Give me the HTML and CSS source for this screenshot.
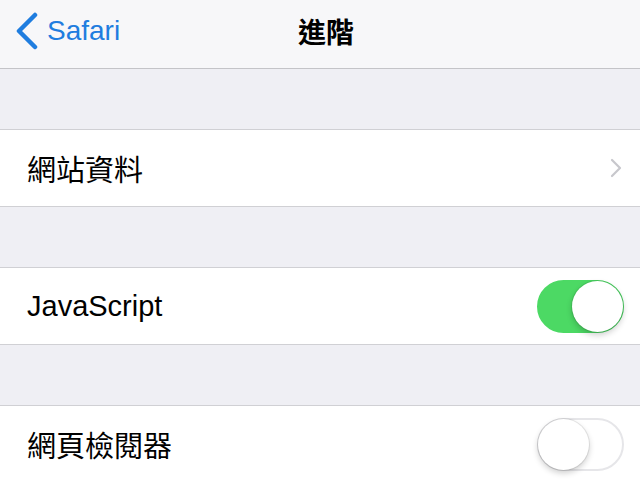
FILE: index.html
```html
<!DOCTYPE html>
<html lang="zh-Hant">
<head>
    <meta charset="UTF-8">
    <meta name="viewport" content="width=device-width, initial-scale=1.0">
    <title>進階</title>
    <link rel="stylesheet" href="styles.css">
</head>
<body>
    <header class="navbar">
        <a class="back" href="#">
            <svg class="back-icon" width="24" height="38" viewBox="0 0 24 38">
                <path d="M21 3 L5 19 L21 35" fill="none" stroke="currentColor" stroke-width="4.5" stroke-linecap="round" stroke-linejoin="round"/>
            </svg>
            <span>Safari</span>
        </a>
        <h1 class="title">進階</h1>
        <div class="spacer"></div>
    </header>

    <main class="settings">
        <section class="group">
            <div class="row">
                <span class="label">網站資料</span>
                <svg class="disclosure" width="12" height="20" viewBox="0 0 12 20">
                    <path d="M2 2 L10 10 L2 18" fill="none" stroke="currentColor" stroke-width="2.2" stroke-linecap="round" stroke-linejoin="round"/>
                </svg>
            </div>
        </section>

        <section class="group">
            <div class="row">
                <span class="label">JavaScript</span>
                <span class="switch on"><span class="knob"></span></span>
            </div>
        </section>

        <section class="group">
            <div class="row">
                <span class="label">網頁檢閱器</span>
                <span class="switch"><span class="knob"></span></span>
            </div>
        </section>
    </main>
</body>
</html>
```

FILE: styles.css
```css
body {
    margin: 0;
    height: 480px;
    overflow: hidden;
    font-family: "Liberation Sans", "Noto Sans CJK TC", sans-serif;
    background-color: #efeff4;
    color: #000;
}

.navbar {
    display: grid;
    grid-template-columns: 1fr auto 1fr;
    align-items: center;
    height: 62px;
    padding-bottom: 6px;
    background-color: #f7f7f9;
    border-bottom: 1px solid #c4c4c8;
}
.back {
    display: flex;
    align-items: center;
    gap: 9px;
    padding-left: 14px;
    color: #1f7ddf;
    text-decoration: none;
    font-size: 28px;
}
.back-icon {
    display: block;
}
.title {
    margin: 0;
    padding-left: 12px;
    font-size: 28px;
    font-weight: bold;
}

.settings {
    display: flex;
    flex-direction: column;
    gap: 60px;
    padding-top: 60px;
}
.group {
    background-color: #fff;
    border-top: 1px solid #d0d0d4;
    border-bottom: 1px solid #d0d0d4;
}
.row {
    display: flex;
    align-items: center;
    justify-content: space-between;
    height: 76px;
    padding: 0 16px 0 27px;
}
.label {
    font-size: 29px;
}
.disclosure {
    color: #c7c7cc;
    margin-right: 2px;
}

.switch {
    position: relative;
    width: 87px;
    height: 53px;
    box-sizing: border-box;
    border-radius: 27px;
    border: 2px solid #e6e6e9;
    background-color: #fff;
}
.switch .knob {
    position: absolute;
    top: -1px;
    left: -1px;
    width: 51px;
    height: 51px;
    border-radius: 50%;
    background-color: #fff;
    box-shadow: 0 3px 6px rgba(0, 0, 0, 0.2), 0 0 0 1px rgba(0, 0, 0, 0.08);
}
.switch.on {
    background-color: #4cd964;
    border-color: #4cd964;
}
.switch.on .knob {
    left: auto;
    right: -1px;
}
```
